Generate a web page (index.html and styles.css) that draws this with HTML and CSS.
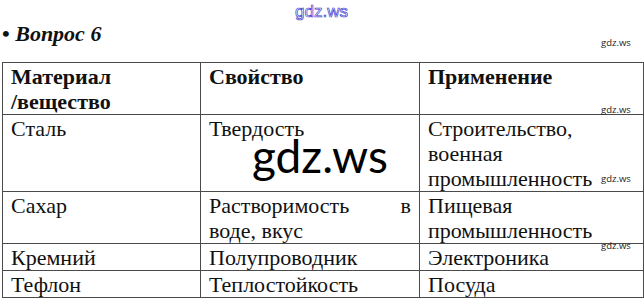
FILE: index.html
```html
<!DOCTYPE html>
<html lang="ru">
<head>
<meta charset="utf-8">
<link rel="stylesheet" href="styles.css">
</head>
<body>
<div class="page">
  <div class="wm-top">gdz.ws</div>
  <h2 class="title">• <em>Вопрос 6</em></h2>
  <table class="grid">
    <colgroup><col class="c1"><col class="c2"><col class="c3"></colgroup>
    <tr class="head">
      <th>Материал<br>/вещество</th>
      <th>Свойство</th>
      <th>Применение</th>
    </tr>
    <tr>
      <td>Сталь</td>
      <td>Твердость</td>
      <td>Строительство,<br>военная<br>промышленность</td>
    </tr>
    <tr>
      <td>Сахар</td>
      <td class="just">Растворимость в воде, вкус</td>
      <td>Пищевая<br>промышленность</td>
    </tr>
    <tr>
      <td>Кремний</td>
      <td>Полупроводник</td>
      <td>Электроника</td>
    </tr>
    <tr>
      <td>Тефлон</td>
      <td>Теплостойкость</td>
      <td>Посуда</td>
    </tr>
  </table>
  <div class="wm-small s1">gdz.ws</div>
  <div class="wm-small s2">gdz.ws</div>
  <div class="wm-small s3">gdz.ws</div>
  <div class="wm-small s4">gdz.ws</div>
  <div class="wm-big">gdz.ws</div>
</div>
</body>
</html>
```
FILE: styles.css
```css
html, body {
  margin: 0;
  padding: 0;
  background: #fff;
}
.page {
  position: relative;
  width: 644px;
  height: 298px;
  overflow: hidden;
  font-family: "Liberation Serif", "Times New Roman", serif;
  color: #111;
}
.title {
  margin: 0;
  padding: 21px 0 0 2px;
  height: 62px;
  box-sizing: border-box;
  font-size: 22px;
  font-weight: bold;
  line-height: 26px;
}
.title em {
  font-style: italic;
}
.grid {
  margin-left: 2px;
  border-collapse: collapse;
  table-layout: fixed;
  width: 641px;
  font-size: 22px;
  line-height: 25px;
}
.c1 { width: 198px; }
.c2 { width: 219px; }
.c3 { width: 224px; }
.grid th, .grid td {
  border: 1px solid #4a4a4a;
  padding: 1px 8px 0 8px;
  vertical-align: top;
  text-align: left;
  font-weight: normal;
}
.grid th {
  font-weight: bold;
}
.grid td.just {
  text-align: justify;
}
.wm-top {
  position: absolute;
  left: 295px;
  top: 2px;
  font-family: "Liberation Sans", Arial, sans-serif;
  font-size: 17px;
  color: #fff;
  -webkit-text-stroke: 0.7px #3a3ad0;
}
.wm-small {
  position: absolute;
  left: 601px;
  font-family: "Open Sans", sans-serif;
  font-size: 9.5px;
  color: #222;
  line-height: 12px;
}
.s1 { top: 37px; }
.s2 { top: 104px; }
.s3 { top: 173px; }
.s4 { top: 240px; }
.wm-big {
  position: absolute;
  left: 252px;
  top: 130px;
  font-family: Lato, sans-serif;
  font-size: 46px;
  line-height: 52px;
  color: #000;
}
```
